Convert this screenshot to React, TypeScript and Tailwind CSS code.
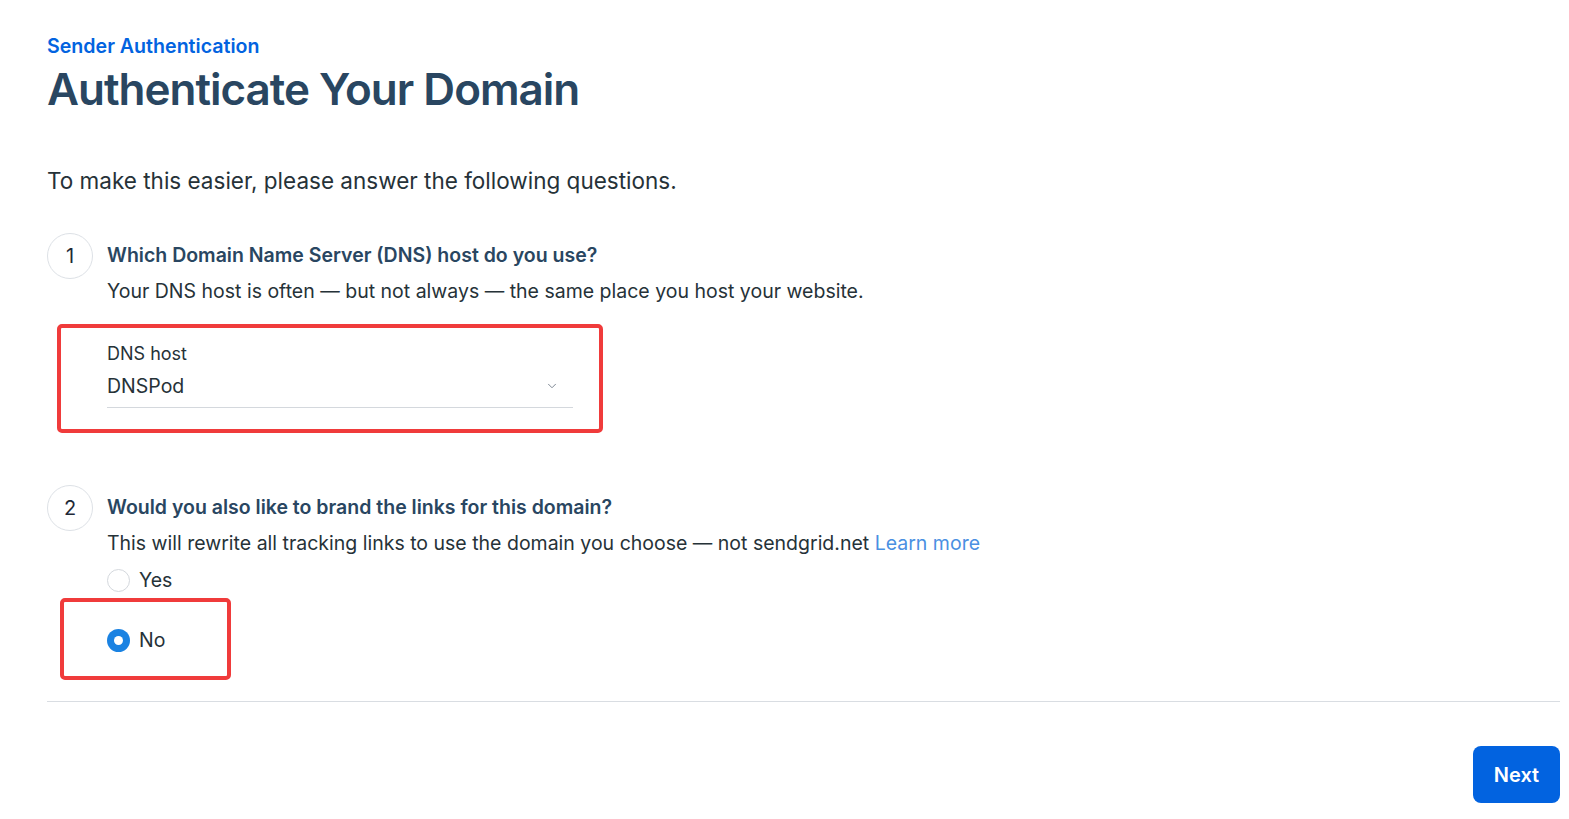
import { ChevronDown } from 'lucide-react';

const Step = ({ n }: { n: number }) => (
  <div className="w-[46px] h-[46px] shrink-0 rounded-full border border-[#dde1e6] flex items-center justify-center text-[20px] text-[#1f2937]">
    {n}
  </div>
);

export default function App() {
  return (
    <div className="min-h-screen bg-white font-['Inter',sans-serif] text-[#263238] pl-[47px] pr-[9px] pt-[32px]">
      {/* Header */}
      <div className="text-[19.6px] leading-[28px] font-semibold text-[#0263e0]">Sender Authentication</div>
      <h1 className="text-[44px] leading-[56px] font-semibold text-[#294661] tracking-[-1px] mt-[1px]">
        Authenticate Your Domain
      </h1>

      <p className="text-[22.5px] leading-[30px] text-[#263238] mt-[49px]">
        To make this easier, please answer the following questions.
      </p>

      {/* Question 1 */}
      <div className="flex gap-[14px] mt-[37px]">
        <Step n={1} />
        <div className="pt-[8px]">
          <div className="text-[19.5px] leading-[28px] font-semibold text-[#294661]">
            Which Domain Name Server (DNS) host do you use?
          </div>
          <div className="text-[19.5px] leading-[28px] text-[#263238] mt-[8px]">
            Your DNS host is often — but not always — the same place you host your website.
          </div>
        </div>
      </div>

      <div className="ml-[10px] mt-[19px] w-[546px] h-[109px] border-[4px] border-[#f03b3b] rounded-[5px] pl-[46px] pr-[26px] pt-[13px]">
        <div className="text-[18px] leading-[26px] text-[#263238]">DNS host</div>
        <div className="flex items-center justify-between border-b border-[#d4d8dd] pb-[7px] mt-[5px]">
          <span className="text-[19.5px] leading-[28px] text-[#263238]">DNSPod</span>
          <ChevronDown size={14} strokeWidth={1.5} className="text-[#6b7785] mr-[14px]" />
        </div>
      </div>

      {/* Question 2 */}
      <div className="flex gap-[14px] mt-[52px]">
        <Step n={2} />
        <div className="pt-[8px]">
          <div className="text-[19.5px] leading-[28px] font-semibold text-[#294661]">
            Would you also like to brand the links for this domain?
          </div>
          <div className="text-[19.5px] leading-[28px] text-[#263238] mt-[8px]">
            This will rewrite all tracking links to use the domain you choose — not sendgrid.net{' '}
            <a className="text-[#4a90e2]">Learn more</a>
          </div>
          <label className="flex items-center gap-[9px] mt-[9px]">
            <span className="w-[23px] h-[23px] rounded-full border border-[#d4d8dd] bg-white" />
            <span className="text-[19.5px] leading-[28px] text-[#263238]">Yes</span>
          </label>
        </div>
      </div>

      <div className="ml-[13px] mt-[4px] w-[171px] h-[82px] border-[4px] border-[#f03b3b] rounded-[5px] pl-[43px] flex items-center">
        <label className="flex items-center gap-[9px] mt-[2px]">
          <span className="w-[23px] h-[23px] rounded-full bg-[#1a82e2] flex items-center justify-center">
            <span className="w-[9px] h-[9px] rounded-full bg-white" />
          </span>
          <span className="text-[19.5px] leading-[28px] text-[#263238]">No</span>
        </label>
      </div>

      <div className="border-t border-[#d9dde2] mt-[21px]" />

      <div className="flex justify-end mt-[44px]">
        <button className="w-[87px] h-[57px] rounded-[8px] bg-[#0263e0] text-white text-[20px] font-semibold">
          Next
        </button>
      </div>
    </div>
  );
}
